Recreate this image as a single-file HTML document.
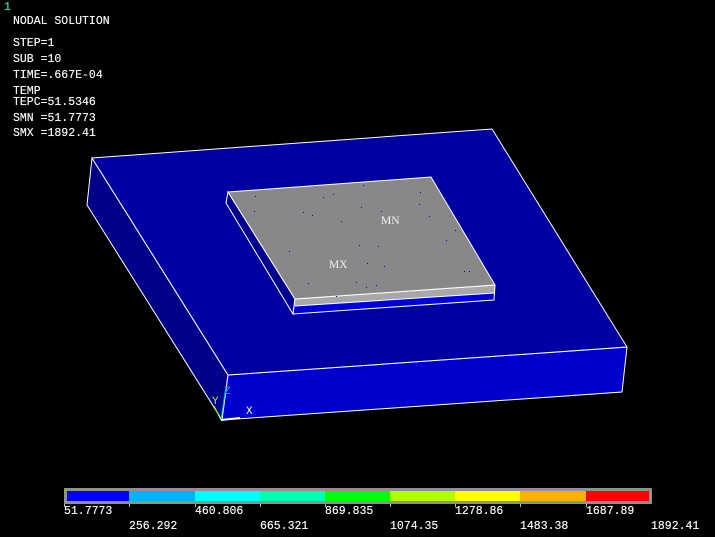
<!DOCTYPE html>
<html><head><style>
html,body{margin:0;padding:0;background:#000;}
body{width:715px;height:537px;position:relative;overflow:hidden;font-family:"Liberation Mono",monospace;}
.t{position:absolute;color:#f4f4f4;font-size:11.5px;line-height:12px;white-space:pre;text-shadow:0 0 0.4px #fff;}
</style></head><body>
<svg width="715" height="537" style="position:absolute;left:0;top:0">
<polygon points="92,158 87,205 222,420 228,375" fill="#000088" stroke="#fff" stroke-width="1"/>
<polygon points="228,375 627,347 622,392 222,420" fill="#0000cc" stroke="#fff" stroke-width="1"/>
<polygon points="92,158 492,129 627,347 228,375" fill="#0000a2" stroke="#fff" stroke-width="1"/>
<polygon points="228,192 226,203 293,314 295,299" fill="#000090" stroke="#fff" stroke-width="1"/>
<polygon points="295,306 495,293 494,300 293,314" fill="#0000dd"/>
<polygon points="295,299 495,285 495,293 295,306" fill="#a8a8a8"/>
<polyline points="295,306 495,293" stroke="#fff" fill="none"/>
<polygon points="295,299 495,285 494,300 293,314" fill="none" stroke="#fff"/>
<polygon points="228,192 431,177 495,285 295,299" fill="#888888" stroke="#fff" stroke-width="1"/>
<g fill="#0000aa">
<rect x="255" y="196" width="1" height="1"/><rect x="323" y="197" width="1" height="1"/><rect x="333" y="194" width="1" height="1"/><rect x="363" y="185" width="1" height="1"/><rect x="254" y="211" width="1" height="1"/><rect x="303" y="212" width="1" height="1"/><rect x="312" y="215" width="1" height="1"/><rect x="341" y="221" width="1" height="1"/><rect x="361" y="207" width="1" height="1"/><rect x="381" y="211" width="1" height="1"/><rect x="419" y="204" width="1" height="1"/><rect x="420" y="192" width="1" height="1"/><rect x="429" y="216" width="1" height="1"/><rect x="289" y="251" width="1" height="1"/><rect x="359" y="245" width="1" height="1"/><rect x="378" y="246" width="1" height="1"/><rect x="446" y="240" width="1" height="1"/><rect x="384" y="266" width="1" height="1"/><rect x="367" y="263" width="1" height="1"/><rect x="455" y="230" width="1" height="1"/><rect x="469" y="271" width="1" height="1"/><rect x="308" y="283" width="1" height="1"/><rect x="356" y="282" width="1" height="1"/><rect x="376" y="285" width="1" height="1"/><rect x="366" y="287" width="1" height="1"/><rect x="336" y="296" width="1" height="1"/><rect x="464" y="271" width="1" height="1"/>
</g>
<text x="381" y="224" fill="#f4f4f4" font-family="Liberation Serif" font-size="11.5">MN</text>
<text x="329" y="268" fill="#f4f4f4" font-family="Liberation Serif" font-size="11.5">MX</text>
<line x1="221" y1="420" x2="226" y2="386" stroke="#00aaff" stroke-width="1"/>
<line x1="221" y1="420" x2="214" y2="406" stroke="#aaff00" stroke-width="1"/>
<line x1="221" y1="420" x2="240" y2="418" stroke="#fff" stroke-width="2"/>
<text x="224" y="394" fill="#00aaff" font-family="Liberation Mono" font-size="11">Z</text>
<text x="212" y="404" fill="#aaee22" font-family="Liberation Mono" font-size="11">Y</text>
<text x="246" y="414" fill="#fff" font-family="Liberation Mono" font-size="11">X</text>
<rect x="64" y="488" width="588" height="16" fill="#909090"/>
<rect x="67" y="491" width="62" height="10" fill="#0000ff"/>
<rect x="129" y="491" width="66" height="10" fill="#00b2ff"/>
<rect x="195" y="491" width="65" height="10" fill="#00ffff"/>
<rect x="260" y="491" width="65" height="10" fill="#00ffb2"/>
<rect x="325" y="491" width="65" height="10" fill="#00ff00"/>
<rect x="390" y="491" width="65" height="10" fill="#b2ff00"/>
<rect x="455" y="491" width="65" height="10" fill="#ffff00"/>
<rect x="520" y="491" width="66" height="10" fill="#ffb200"/>
<rect x="586" y="491" width="63" height="10" fill="#ff0000"/>
<g stroke="#bbb"><line x1="64.5" y1="504" x2="64.5" y2="507"/><line x1="129.5" y1="504" x2="129.5" y2="507"/><line x1="195.5" y1="504" x2="195.5" y2="507"/><line x1="260.5" y1="504" x2="260.5" y2="507"/><line x1="325.5" y1="504" x2="325.5" y2="507"/><line x1="390.5" y1="504" x2="390.5" y2="507"/><line x1="455.5" y1="504" x2="455.5" y2="507"/><line x1="520.5" y1="504" x2="520.5" y2="507"/><line x1="586.5" y1="504" x2="586.5" y2="507"/></g>
</svg>
<div class="t" style="left:4px;top:2px;color:#22d0a0">1</div>
<div class="t" style="left:13px;top:16px">NODAL SOLUTION</div>
<div class="t" style="left:13px;top:38px">STEP=1</div>
<div class="t" style="left:13px;top:54px">SUB =10</div>
<div class="t" style="left:13px;top:70px">TIME=.667E-04</div>
<div class="t" style="left:13px;top:86px">TEMP</div>
<div class="t" style="left:13px;top:97px">TEPC=51.5346</div>
<div class="t" style="left:13px;top:113px">SMN =51.7773</div>
<div class="t" style="left:13px;top:128px">SMX =1892.41</div>
<div class="t" style="left:64px;top:506px">51.7773</div>
<div class="t" style="left:195px;top:506px">460.806</div>
<div class="t" style="left:325px;top:506px">869.835</div>
<div class="t" style="left:455px;top:506px">1278.86</div>
<div class="t" style="left:586px;top:506px">1687.89</div>
<div class="t" style="left:129px;top:521px">256.292</div>
<div class="t" style="left:260px;top:521px">665.321</div>
<div class="t" style="left:390px;top:521px">1074.35</div>
<div class="t" style="left:520px;top:521px">1483.38</div>
<div class="t" style="left:651px;top:521px">1892.41</div>
</body></html>
